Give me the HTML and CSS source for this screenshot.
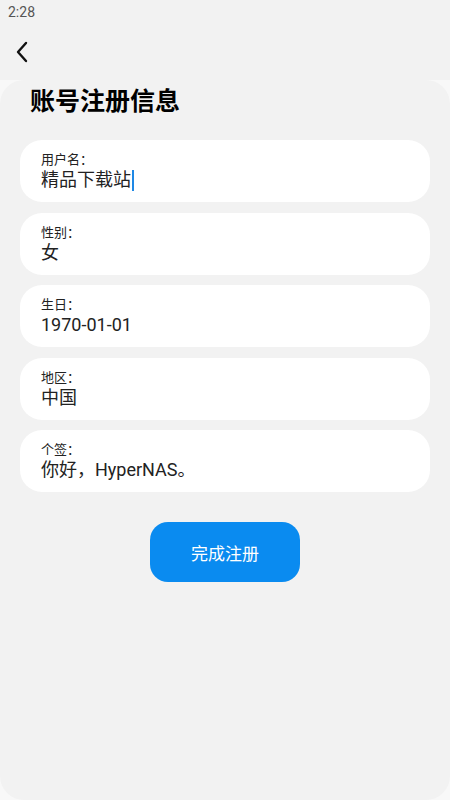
FILE: index.html
```html
<!DOCTYPE html>
<html lang="zh">
<head>
<meta charset="utf-8">
<link rel="stylesheet" href="styles.css">
</head>
<body>
<div class="app">
  <div class="status">2:28</div>
  <div class="header">
    <svg class="back" width="14" height="22" viewBox="0 0 14 22"><path d="M11 2 L3 11 L11 20" fill="none" stroke="#111" stroke-width="2.4" stroke-linecap="round" stroke-linejoin="round"/></svg>
  </div>
  <div class="sheet">
    <h1 class="title">账号注册信息</h1>
    <div class="fields">
      <div class="card">
        <div class="label">用户名：</div>
        <div class="value">精品下载站<span class="cursor"></span></div>
      </div>
      <div class="card">
        <div class="label">性别：</div>
        <div class="value">女</div>
      </div>
      <div class="card">
        <div class="label">生日：</div>
        <div class="value">1970-01-01</div>
      </div>
      <div class="card">
        <div class="label">地区：</div>
        <div class="value">中国</div>
      </div>
      <div class="card">
        <div class="label">个签：</div>
        <div class="value">你好，HyperNAS。</div>
      </div>
    </div>
    <div class="actions">
      <button class="submit">完成注册</button>
    </div>
  </div>
</div>
</body>
</html>
```
FILE: styles.css
```css
* { box-sizing: border-box; }
html, body { margin: 0; padding: 0; }
body {
  width: 450px;
  height: 800px;
  overflow: hidden;
  background: #f8f8f8;
  font-family: Roboto, "Noto Sans CJK SC", sans-serif;
  color: #1a1a1a;
}
.app {
  display: flex;
  flex-direction: column;
  height: 800px;
}
.status {
  height: 24px;
  background: #f2f2f2;
  padding-left: 8px;
  font-size: 14px;
  line-height: 24px;
  color: #555;
}
.header {
  height: 56px;
  background: #f2f2f2;
  display: flex;
  align-items: center;
  padding-left: 15px;
}
.back { display: block; }
.sheet {
  flex: 1;
  background: #f2f2f2;
  border-radius: 24px;
  padding-top: 6px;
}
.title {
  margin: 0;
  padding-left: 30px;
  font-size: 25px;
  line-height: 32px;
  font-weight: bold;
  color: #000;
}
.fields {
  display: flex;
  flex-direction: column;
  gap: 10.5px;
  margin-top: 22px;
  padding: 0 20px;
}
.card {
  background: #fff;
  border-radius: 22px;
  height: 62px;
  padding: 11px 21px 0;
}
.label {
  font-size: 13px;
  line-height: 17px;
  color: #222;
}
.value {
  font-size: 18px;
  line-height: 24px;
  color: #222;
  display: flex;
  align-items: center;
}
.cursor {
  display: inline-block;
  width: 2px;
  height: 21px;
  background: #1e88e5;
  margin-left: 1px;
}
.actions {
  display: flex;
  justify-content: center;
  margin-top: 30px;
}
.submit {
  width: 150px;
  height: 60px;
  border: none;
  border-radius: 18px;
  background: #0a8bf0;
  color: #fff;
  font-family: Roboto, "Noto Sans CJK SC", sans-serif;
  font-size: 17px;
}
```
